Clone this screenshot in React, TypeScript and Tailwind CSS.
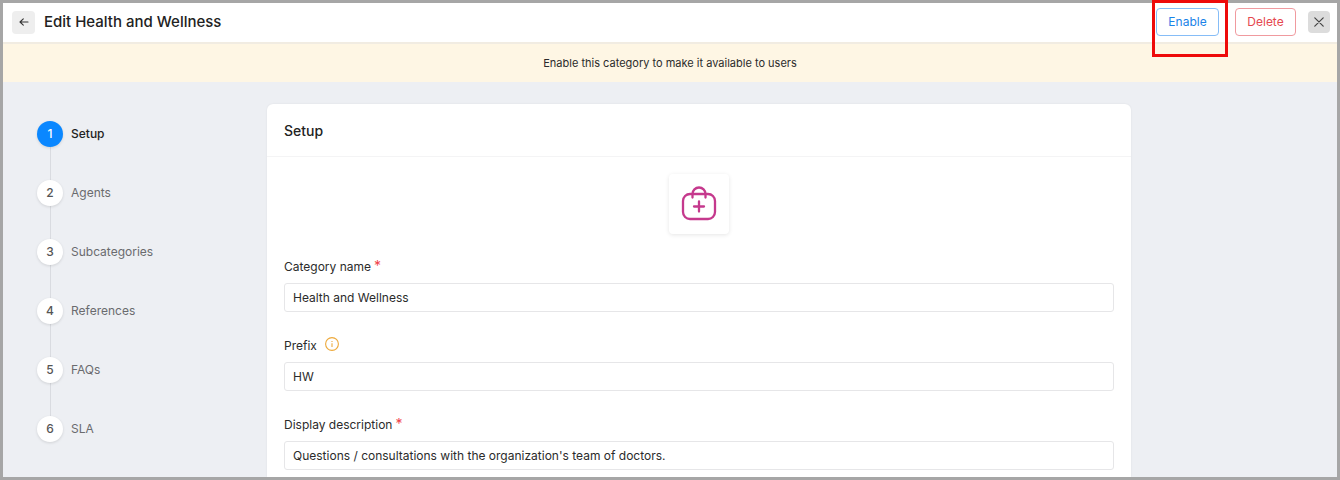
import { useState } from 'react';
import type { ReactNode } from 'react';
import clsx from 'clsx';

const STEPS = ['Setup', 'Agents', 'Subcategories', 'References', 'FAQs', 'SLA'];

export default function App() {
  return (
    <div className="h-screen flex flex-col border-3 border-[#a6a6a6] bg-[#edeff3] font-['Inter',sans-serif] text-[12px] text-[#2b2b2b]">
      <Header />
      <p className="shrink-0 bg-[#fef6e4] h-[38px] flex items-center justify-center text-[11px]">
        Enable this category to make it available to users
      </p>
      <main className="flex-1 min-h-0 overflow-hidden grid grid-cols-[264px_1fr_206px]">
        <Steps />
        <SetupCard />
      </main>
    </div>
  );
}

function Header() {
  return (
    <header className="shrink-0 h-[41px] flex items-center bg-white border-b-2 border-[#f1ece2] pl-[9px] pr-[7px] pb-px">
      <button aria-label="Back" className="size-[23px] rounded bg-[#eeeeee] flex items-center justify-center">
        <svg viewBox="0 0 10 10" className="size-[10px]" fill="none" stroke="#333" strokeWidth="1.1" strokeLinecap="round" strokeLinejoin="round">
          <path d="M9 5H1M4.3 1.8 1 5l3.3 3.2" />
        </svg>
      </button>
      <h1 className="ml-[9px] text-[15px] font-medium text-[#222]">Edit Health and Wellness</h1>
      <div className="ml-auto flex items-center">
        <div className="relative">
          <button className="block w-[63px] h-[28px] rounded-[4px] border border-[#86bdf7] bg-white text-[#1a83e8]">
            Enable
          </button>
          <span className="absolute -left-1 -top-2 w-[76px] h-[57px] border-3 border-[#ee0a0a] pointer-events-none" />
        </div>
        <button className="ml-4 w-[61px] h-[28px] rounded-[4px] border border-[#f09a9f] bg-white text-[#e5484f]">
          Delete
        </button>
        <button aria-label="Close" className="ml-3 size-[22px] rounded bg-[#dcdcdc] flex items-center justify-center">
          <svg viewBox="0 0 10 10" className="size-[10px]" fill="none" stroke="#444" strokeWidth="1.2" strokeLinecap="round">
            <path d="m.8.8 8.4 8.4M9.200.8.8 9.200" />
          </svg>
        </button>
      </div>
    </header>
  );
}

function Steps() {
  const [active, setActive] = useState(0);

  return (
    <ol className="pl-[34px] pt-[39px]">
      {STEPS.map((name, i) => (
        <li key={name}>
          {i > 0 && <div className="ml-[13px] w-px h-[33px] bg-[#d9dbe0]" />}
          <button onClick={() => setActive(i)} className="flex items-center gap-2">
            <span
              className={clsx(
                'size-[26px] rounded-full flex items-center justify-center font-medium shadow-[0_1px_3px_rgba(0,0,0,0.12)]',
                i === active ? 'bg-[#0a87ff] text-white' : 'bg-white text-[#555]'
              )}
            >
              {i + 1}
            </span>
            <span className={i === active ? 'font-medium text-[#222]' : 'text-[#6a6b6e]'}>{name}</span>
          </button>
        </li>
      ))}
    </ol>
  );
}

function SetupCard() {
  return (
    <section className="mt-[22px] bg-white rounded-t-md shadow-[0_0_2px_rgba(0,0,0,0.08)]">
      <h2 className="h-[53px] flex items-center px-[17px] border-b border-[#f4f4f5] text-[14px] font-medium text-[#222]">
        Setup
      </h2>
      <div className="px-[17px] pt-[17px]">
        <div className="mx-auto size-[60px] rounded bg-white shadow-[0_1px_4px_rgba(0,0,0,0.1)] flex items-center justify-center">
          <BagIcon />
        </div>
        <form className="mt-[24px] flex flex-col gap-[25px]">
          <Field id="name" label="Category name" value="Health and Wellness" mark={<Required />} />
          <Field id="prefix" label="Prefix" value="HW" mark={<InfoIcon />} />
          <Field
            id="description"
            label="Display description"
            value="Questions / consultations with the organization's team of doctors."
            mark={<Required />}
          />
        </form>
      </div>
    </section>
  );
}

type FieldProps = { id: string; label: string; value: string; mark: ReactNode };

function Field({ id, label, value, mark }: FieldProps) {
  return (
    <div>
      <div className="h-[18px] flex items-center">
        <label htmlFor={id}>{label}</label>
        {mark}
      </div>
      <input
        id={id}
        defaultValue={value}
        className="mt-[7px] block w-full h-[29px] rounded-[3px] border border-[#e6e6e8] bg-white px-2 outline-none focus:border-[#86bdf7]"
      />
    </div>
  );
}

function Required() {
  return <span className="ml-[3px] self-start text-[14px] leading-4 text-[#f0434b]">*</span>;
}

function InfoIcon() {
  return (
    <svg viewBox="0 0 14 14" className="ml-2 self-start size-[14px]" fill="none" stroke="#eda93b">
      <circle cx="7" cy="7" r="6.4" strokeWidth="1.1" />
      <path d="M7 6.200v3.800" strokeWidth="1.1" />
      <path d="M7 4v1.100" strokeWidth="1.1" />
    </svg>
  );
}

function BagIcon() {
  return (
    <svg viewBox="0 0 36 36" className="size-[36px]" fill="none" stroke="#c5398d" strokeWidth="2.3" strokeLinecap="round">
      <rect x="2" y="8" width="32" height="25" rx="7" />
      <path d="M11.500 11.500V8a6.500 6.500 0 0 1 13 0v3.500" />
      <path d="M18 15.500v10M13 20.500h10" />
    </svg>
  );
}
